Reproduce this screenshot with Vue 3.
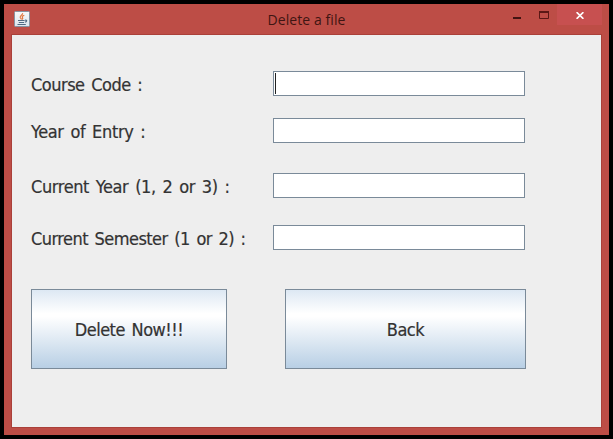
<script setup>
import { ref } from 'vue'

const fields = ref([
  { id: 'course', label: 'Course Code :', value: '' },
  { id: 'entry', label: 'Year of Entry :', value: '' },
  { id: 'year', label: 'Current Year (1, 2 or 3) :', value: '' },
  { id: 'semester', label: 'Current Semester (1 or 2) :', value: '' },
])
</script>

<template>
  <div class="screen">
    <div class="window">
      <header class="titlebar">
        <svg class="app-icon" width="16" height="16" viewBox="0 0 16 16">
          <defs>
            <linearGradient id="tile" x1="0" y1="0" x2="0" y2="1">
              <stop offset="0" stop-color="#f8f8f8" />
              <stop offset="1" stop-color="#dce5ee" />
            </linearGradient>
          </defs>
          <rect x=".5" y=".5" width="15" height="15" rx="1" fill="url(#tile)" stroke="#8794a2" />
          <path d="M8.6 2.2C9 4 5.8 4.600 6.200 6.400C6.400 7.200 7.300 7.700 7.500 8.500M10.300 4.200C8.600 4.800 7.700 5.600 8.500 6.600C9 7.300 8.700 7.900 8.200 8.500" fill="none" stroke="#e3773f" stroke-width="1.200" />
          <path d="M4 9.500H10.600M4.800 11.500H10M11 9.200C13.600 8.600 13 10.900 10.800 11.200M3.500 13.500H11.800" fill="none" stroke="#506b83" stroke-width="1.100" />
        </svg>
        <h1 class="title">Delete a file</h1>
        <div class="controls">
          <button class="control minimize" aria-label="Minimize">
            <svg width="8" height="2"><rect width="8" height="2" fill="#421412" /></svg>
          </button>
          <button class="control maximize" aria-label="Maximize">
            <svg width="10" height="8"><path d="M.5 1H9.500V7.500H.5Z" fill="none" stroke="#5a1815" /><path d="M0 1H10" stroke="#5a1815" stroke-width="2" /></svg>
          </button>
          <button class="control close" aria-label="Close">
            <svg width="8" height="7"><path d="M.6 .2L7.400 6.800M7.400 .2L.6 6.800" stroke="#fff" stroke-width="1.700" /></svg>
          </button>
        </div>
      </header>
      <main class="client">
        <form class="form" @submit.prevent>
          <div v-for="f in fields" :key="f.id" class="row" :class="f.id">
            <label :for="f.id"><span>{{ f.label }}</span></label>
            <div class="field">
              <i v-if="f.id === 'course'" class="caret"></i>
              <input :id="f.id" v-model="f.value" type="text" />
            </div>
          </div>
          <div class="actions">
            <button class="action delete" type="submit"><span>Delete Now!!!</span></button>
            <button class="action back" type="button"><span>Back</span></button>
          </div>
        </form>
      </main>
    </div>
  </div>
</template>

<style>
body {
  margin: 0;
  overflow: hidden;
}
</style>

<style scoped>
.screen {
  box-sizing: border-box;
  width: 613px;
  height: 439px;
  padding: 4px;
  background: #000;
}
.window {
  box-sizing: border-box;
  display: flex;
  flex-direction: column;
  height: 431px;
  padding: 0 8px 8px;
  background: #bd4d46;
}
.titlebar {
  display: grid;
  grid-template-columns: 160px 1fr 160px;
  flex: none;
  height: 31px;
  margin: 0 -8px;
}
.app-icon {
  margin: 7px 0 0 10px;
}
.title {
  margin: 6px 0 0;
  font: 400 14px/20px "Open Sans", "Noto Sans", sans-serif;
  letter-spacing: 0.08px;
  color: #3f1512;
  text-align: center;
}
.controls {
  display: flex;
  justify-content: flex-end;
  padding-right: 7px;
}
.control {
  display: flex;
  justify-content: center;
  width: 27px;
  height: 20px;
  padding: 0;
  border: 0;
  background: none;
}
.minimize {
  padding-top: 13px;
}
.maximize {
  padding-top: 7px;
}
.close {
  width: 45px;
  height: 21px;
  padding-top: 8px;
  background: #c75050;
}
.client {
  flex: 1;
  background: #eee;
  box-shadow: 0 0 0 1px #aa4039;
}
.form {
  padding: 36px 0 0 19px;
}
.row {
  display: flex;
  height: 25px;
}
.entry {
  margin-top: 22px;
}
.year {
  margin-top: 30px;
}
.semester {
  margin-top: 27px;
}
label {
  width: 242px;
  white-space: nowrap;
}
label,
.action {
  font: 400 18px/27px "DejaVu Sans Condensed", "DejaVu Sans", sans-serif;
  font-stretch: condensed;
  letter-spacing: -0.5px;
  word-spacing: 2px;
  color: #333;
  -webkit-text-stroke: 0.2px #333;
}
.entry label {
  letter-spacing: -0.35px;
}
.year label {
  letter-spacing: -0.38px;
}
.semester label {
  letter-spacing: -0.54px;
}
.field {
  box-sizing: border-box;
  display: flex;
  width: 252px;
  height: 25px;
  padding: 1px;
  border: 1px solid #7a8a99;
  background: #fff;
}
.caret {
  flex: none;
  width: 1px;
  height: 21px;
  background: #222;
}
input {
  flex: 1;
  min-width: 0;
  padding: 0 3px;
  border: 0;
  outline: 0;
  background: transparent;
  font: 16px "DejaVu Sans", sans-serif;
}
.actions {
  display: flex;
  gap: 58px;
  margin-top: 39px;
}
.action {
  box-sizing: border-box;
  height: 80px;
  padding: 0;
  border: 1px solid #7a8a99;
  background: linear-gradient(#dde8f3 0%, #fff 30%, #fff 34%, #b8cfe5 100%);
}
.delete {
  width: 196px;
}
.back {
  width: 241px;
}
</style>
